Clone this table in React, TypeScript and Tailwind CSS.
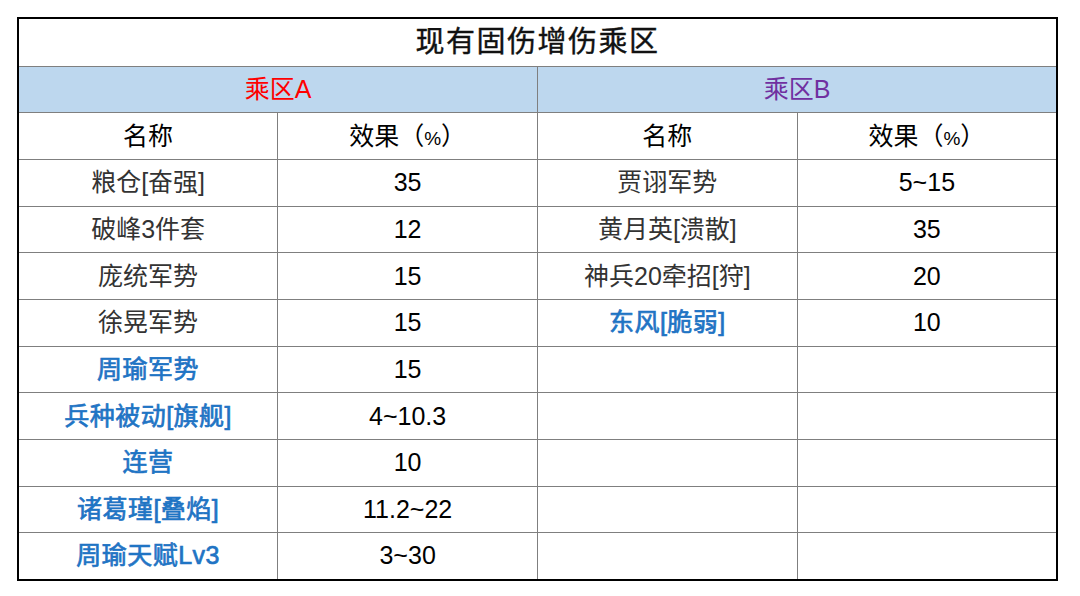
import React from "react";

type Row = { name: string; value: string; blue?: boolean };

const rowsA: Row[] = [
  { name: "粮仓[奋强]", value: "35" },
  { name: "破峰3件套", value: "12" },
  { name: "庞统军势", value: "15" },
  { name: "徐晃军势", value: "15" },
  { name: "周瑜军势", value: "15", blue: true },
  { name: "兵种被动[旗舰]", value: "4~10.3", blue: true },
  { name: "连营", value: "10", blue: true },
  { name: "诸葛瑾[叠焰]", value: "11.2~22", blue: true },
  { name: "周瑜天赋Lv3", value: "3~30", blue: true },
];

const rowsB: Row[] = [
  { name: "贾诩军势", value: "5~15" },
  { name: "黄月英[溃散]", value: "35" },
  { name: "神兵20牵招[狩]", value: "20" },
  { name: "东风[脆弱]", value: "10", blue: true },
];

const cell = "border border-[#7f7f7f] text-center align-middle h-[46.7px] leading-none";
const nameCls = (r?: Row) =>
  r?.blue
    ? "text-[#1f74c4] tracking-[0.5px] [-webkit-text-stroke:0.7px_#1f74c4]"
    : "text-[#333333]";

const App = () => {
  return (
    <div
      className="w-[1080px] h-[596px] bg-white pt-[17px] pl-[17px]"
      style={{ fontFamily: '"Liberation Sans", "Noto Sans CJK SC", sans-serif' }}
    >
      <table className="w-[1041px] border-collapse border-2 border-black table-fixed text-[25px]">
        <tbody>
          <tr>
            <td colSpan={4} className="border-2 border-black border-b-[#7f7f7f] border-b text-center h-[48px] text-[29px] tracking-[1.5px] leading-none text-[#111111] [-webkit-text-stroke:0.4px_#111111]">
              现有固伤增伤乘区
            </td>
          </tr>
          <tr className="bg-[#bdd7ee]">
            <td colSpan={2} className={`${cell} border-[#3a3a3a] text-[#ff0000]`}>乘区A</td>
            <td colSpan={2} className={`${cell} border-[#3a3a3a] text-[#7030a0]`}>乘区B</td>
          </tr>
          <tr className="text-black">
            <td className={cell}>名称</td>
            <td className={cell}>效果（<span className="text-[19px]">%</span>）</td>
            <td className={cell}>名称</td>
            <td className={cell}>效果（<span className="text-[19px]">%</span>）</td>
          </tr>
          {rowsA.map((a, i) => {
            const b = rowsB[i];
            return (
              <tr key={i}>
                <td className={`${cell} ${nameCls(a)}`}>{a.name}</td>
                <td className={`${cell} text-black`}>{a.value}</td>
                <td className={`${cell} ${nameCls(b)}`}>{b?.name ?? ""}</td>
                <td className={`${cell} text-black`}>{b?.value ?? ""}</td>
              </tr>
            );
          })}
        </tbody>
      </table>
    </div>
  );
};

export default App;
